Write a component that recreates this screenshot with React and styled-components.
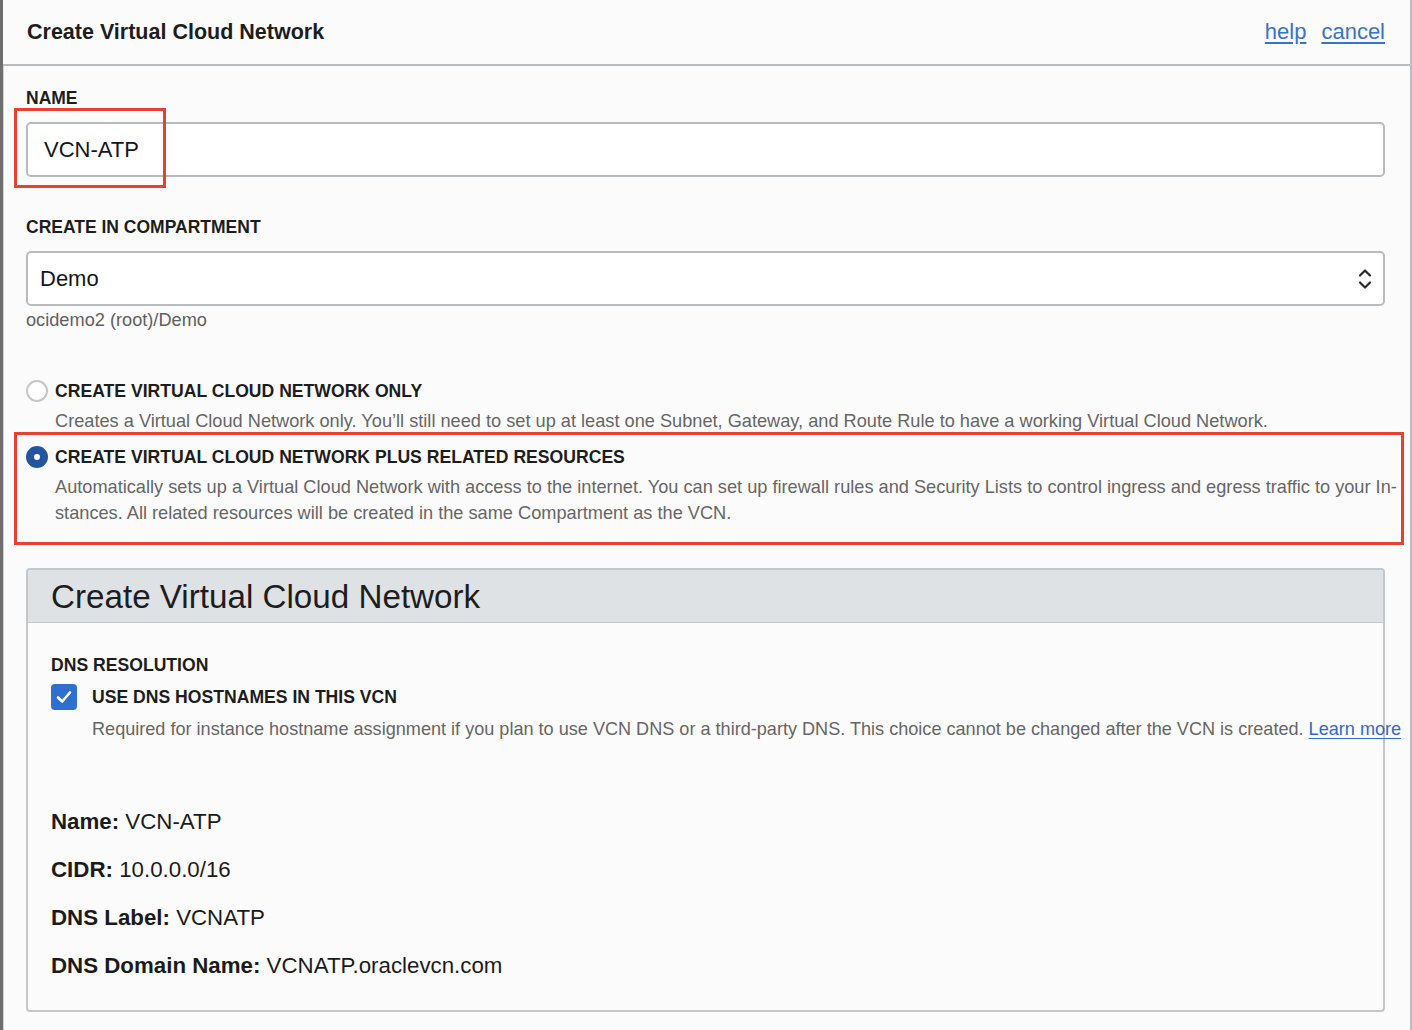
import styled, { createGlobalStyle } from 'styled-components';

const GlobalStyle = createGlobalStyle`
  html, body {
    margin: 0;
    background: #fbfbfb;
  }
  body {
    font-family: "Liberation Sans", Arial, sans-serif;
    color: #1b1b1b;
  }
`;

const Frame = styled.div`
  display: flex;
  flex-direction: column;
  min-height: 100vh;
  box-sizing: border-box;
  border-left: 3px solid #6e6e6e;
  border-right: 2px solid #b9bcbf;
  background: #fbfbfb;
`;

const Header = styled.header`
  height: 64px;
  display: flex;
  align-items: center;
  justify-content: space-between;
  padding: 0 25px 0 24px;
  border-bottom: 2px solid #b9bcbf;
`;

const HeaderTitle = styled.h1`
  margin: 0;
  font-size: 21.5px;
  font-weight: 700;
  color: #1d1d1d;
`;

const HeaderLinks = styled.div`
  display: flex;
  gap: 15px;
`;

const HeaderLink = styled.a`
  font-size: 22px;
  color: #3a73c4;
  text-decoration: underline;
  text-underline-offset: 3px;
  cursor: pointer;
`;

const Body = styled.main`
  flex: 1;
  border-left: 1px solid #cfd1d3;
  padding: 22px 25px 18px 22px;
`;

const FieldLabel = styled.div`
  font-size: 17.5px;
  line-height: 20px;
  font-weight: 700;
  color: #1d1d1d;
  margin-top: ${({ $top }) => $top || 0}px;
  margin-bottom: 14px;
`;

const InputWrap = styled.div`
  position: relative;
`;

const InputBox = styled.div`
  height: 55px;
  box-sizing: border-box;
  border: 2px solid #b9bcbf;
  border-radius: 5px;
  background: #fff;
  display: flex;
  align-items: center;
  justify-content: space-between;
  padding: 0 ${({ $pr }) => $pr || 16}px 0 ${({ $pl }) => $pl || 16}px;
  font-size: 22px;
  color: #161616;
`;

const Highlight = styled.div`
  position: absolute;
  box-sizing: border-box;
  border: 3px solid #e5432e;
  pointer-events: none;
`;

const Hint = styled.div`
  margin-top: 4px;
  font-size: 18.2px;
  line-height: 20px;
  color: #5f5f5f;
`;

const Option = styled.div`
  position: relative;
  margin-top: ${({ $top }) => $top}px;
`;

const OptionRow = styled.div`
  display: flex;
  align-items: center;
  gap: 7px;
  height: 22px;
`;

const Radio = styled.span`
  width: 22px;
  height: 22px;
  box-sizing: border-box;
  border-radius: 50%;
  display: inline-flex;
  align-items: center;
  justify-content: center;
  border: 2px solid ${({ $checked }) => ($checked ? '#24569f' : '#c4c6c9')};
  background: ${({ $checked }) => ($checked ? '#24569f' : '#fff')};
  &::after {
    content: '';
    display: ${({ $checked }) => ($checked ? 'block' : 'none')};
    width: 6px;
    height: 6px;
    border-radius: 50%;
    background: #fff;
  }
`;

const OptionLabel = styled.span`
  font-size: 17.6px;
  font-weight: 700;
  color: #1d1d1d;
`;

const OptionDesc = styled.div`
  margin-top: 6px;
  padding-left: 29px;
  font-size: 18.2px;
  line-height: 26px;
  color: #666;
  white-space: nowrap;
`;

const Panel = styled.section`
  margin-top: 42px;
  border: 2px solid #c4c7ca;
  border-radius: 4px;
  background: #fbfbfb;
`;

const PanelHead = styled.div`
  height: 53px;
  display: flex;
  align-items: center;
  padding: 2px 23px 0;
  box-sizing: border-box;
  background: #dfe2e5;
  border-bottom: 1px solid #c4c7ca;
  font-size: 33.2px;
  color: #1d1d1d;
`;

const PanelBody = styled.div`
  padding: 32px 23px 30px;
`;

const SubLabel = styled.div`
  font-size: 17.6px;
  line-height: 20px;
  font-weight: 700;
  color: #1d1d1d;
`;

const CheckRow = styled.div`
  margin-top: 9px;
  display: flex;
  align-items: center;
  gap: 15px;
`;

const CheckBox = styled.span`
  width: 26px;
  height: 26px;
  border-radius: 4px;
  background: #2f6fcd;
  display: inline-flex;
  align-items: center;
  justify-content: center;
`;

const CheckDesc = styled.div`
  margin-top: 6px;
  padding-left: 41px;
  font-size: 18.1px;
  line-height: 26px;
  color: #666;
  white-space: nowrap;
`;

const InlineLink = styled.a`
  color: #2e6bc6;
  text-decoration: underline;
  text-underline-offset: 3px;
`;

const Summary = styled.div`
  margin-top: 66px;
  display: flex;
  flex-direction: column;
  gap: 20px;
`;

const SummaryRow = styled.div`
  font-size: 22.3px;
  line-height: 28px;
  color: #1b1b1b;
  b {
    font-weight: 700;
  }
`;

const Chevrons = () => (
  <svg width="16" height="26" viewBox="0 0 16 26" fill="none" stroke="#2b2b2b" strokeWidth="2.2" strokeLinecap="round" strokeLinejoin="round">
    <path d="M3 9.5 L8 4.5 L13 9.5" />
    <path d="M3 16.5 L8 21.5 L13 16.5" />
  </svg>
);

const CheckMark = () => (
  <svg width="18" height="18" viewBox="0 0 18 18" fill="none" stroke="#fff" strokeWidth="2.6" strokeLinecap="round" strokeLinejoin="round">
    <path d="M3 9.5 L7.2 13.5 L15 4.5" />
  </svg>
);

const summary = [
  { label: 'Name:', value: 'VCN-ATP' },
  { label: 'CIDR:', value: '10.0.0.0/16' },
  { label: 'DNS Label:', value: 'VCNATP' },
  { label: 'DNS Domain Name:', value: 'VCNATP.oraclevcn.com' },
];

const App = () => (
  <>
    <GlobalStyle />
    <Frame>
      <Header>
        <HeaderTitle>Create Virtual Cloud Network</HeaderTitle>
        <HeaderLinks>
          <HeaderLink>help</HeaderLink>
          <HeaderLink>cancel</HeaderLink>
        </HeaderLinks>
      </Header>
      <Body>
        <FieldLabel>NAME</FieldLabel>
        <InputWrap>
          <InputBox $pl={16}>VCN-ATP</InputBox>
          <Highlight style={{ left: -12, top: -14, width: 152, height: 80 }} />
        </InputWrap>

        <FieldLabel $top={40}>CREATE IN COMPARTMENT</FieldLabel>
        <InputBox $pl={12} $pr={10}>
          <span>Demo</span>
          <Chevrons />
        </InputBox>
        <Hint>ocidemo2 (root)/Demo</Hint>

        <Option $top={50}>
          <OptionRow>
            <Radio />
            <OptionLabel>CREATE VIRTUAL CLOUD NETWORK ONLY</OptionLabel>
          </OptionRow>
          <OptionDesc>
            Creates a Virtual Cloud Network only. You’ll still need to set up at least one Subnet, Gateway, and Route Rule to have a working Virtual Cloud Network.
          </OptionDesc>
        </Option>

        <Option $top={12}>
          <OptionRow>
            <Radio $checked />
            <OptionLabel>CREATE VIRTUAL CLOUD NETWORK PLUS RELATED RESOURCES</OptionLabel>
          </OptionRow>
          <OptionDesc>
            Automatically sets up a Virtual Cloud Network with access to the internet. You can set up firewall rules and Security Lists to control ingress and egress traffic to your In-
            <br />
            stances. All related resources will be created in the same Compartment as the VCN.
          </OptionDesc>
          <Highlight style={{ left: -12, top: -14, right: -19, bottom: -19 }} />
        </Option>

        <Panel>
          <PanelHead>Create Virtual Cloud Network</PanelHead>
          <PanelBody>
            <SubLabel>DNS RESOLUTION</SubLabel>
            <CheckRow>
              <CheckBox>
                <CheckMark />
              </CheckBox>
              <OptionLabel>USE DNS HOSTNAMES IN THIS VCN</OptionLabel>
            </CheckRow>
            <CheckDesc>
              Required for instance hostname assignment if you plan to use VCN DNS or a third-party DNS. This choice cannot be changed after the VCN is created.{' '}
              <InlineLink>Learn more</InlineLink>
            </CheckDesc>
            <Summary>
              {summary.map((row) => (
                <SummaryRow key={row.label}>
                  <b>{row.label}</b> {row.value}
                </SummaryRow>
              ))}
            </Summary>
          </PanelBody>
        </Panel>
      </Body>
    </Frame>
  </>
);

export default App;
